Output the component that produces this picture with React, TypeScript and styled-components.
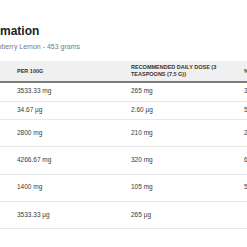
import React from "react";
import styled, { createGlobalStyle } from "styled-components";

const Global = createGlobalStyle`
  html, body { margin: 0; padding: 0; background: #ffffff; overflow: hidden; }
  body { font-family: "Liberation Sans", Arial, sans-serif; }
`;

const Page = styled.div`
  width: 440px;
  margin-left: -90px;
  padding-top: 24px;
`;

const Title = styled.h2`
  margin: 0;
  font-size: 12px;
  line-height: 14px;
  font-weight: 700;
  color: #222;
`;

const Subtitle = styled.p`
  margin: 4px 0 0;
  font-size: 7px;
  line-height: 10px;
  color: #7a7a7a;
  white-space: nowrap;
`;

const Table = styled.table`
  margin-top: 9px;
  border-collapse: collapse;
  table-layout: fixed;
  width: 426px;
`;

const Col = styled.col<{ $w: number }>`
  width: ${(p) => p.$w}px;
`;

const Th = styled.th`
  background: #f0f0f0;
  border-bottom: 2px solid #7d7d7d;
  padding: 3px 8px;
  font-size: 5.5px;
  line-height: 7px;
  font-weight: 700;
  text-transform: uppercase;
  text-align: left;
  vertical-align: middle;
  color: #333;
`;

const Td = styled.td`
  border-bottom: 1px solid #e8e8e8;
  padding: 4.375px 8px;
  font-size: 6.5px;
  line-height: 8.75px;
  color: #3a3a3a;
  vertical-align: middle;
`;

const rows = [
  ["Vitamin C", "3533.33 mg", "265 mg", "331%"],
  ["Vitamin D3", "34.67 µg", "2.60 µg", "52%"],
  ["Calcium (as calcium carbonate)", "2800 mg", "210 mg", "26%"],
  ["Potassium (as potassium citrate)", "4266.67 mg", "320 mg", "64%"],
  ["Magnesium (as magnesium citrate)", "1400 mg", "105 mg", "53%"],
  ["Biotin (as D-biotin, high potency)", "3533.33 µg", "265 µg", ""],
];

export default function App() {
  return (
    <>
      <Global />
      <Page>
        <Title>Nutritional Information</Title>
        <Subtitle>Nutrition Information for Raspberry Lemon - 453 grams</Subtitle>
        <Table>
          <colgroup>
            <Col $w={99} />
            <Col $w={114} />
            <Col $w={113} />
            <Col $w={100} />
          </colgroup>
          <thead>
            <tr>
              <Th>Nutrient</Th>
              <Th>Per 100g</Th>
              <Th>Recommended daily dose (3 teaspoons (7.5 g))</Th>
              <Th>% NRV</Th>
            </tr>
          </thead>
          <tbody>
            {rows.map((r) => (
              <tr key={r[0]}>
                {r.map((c, i) => (
                  <Td key={i}>{c}</Td>
                ))}
              </tr>
            ))}
          </tbody>
        </Table>
      </Page>
    </>
  );
}
